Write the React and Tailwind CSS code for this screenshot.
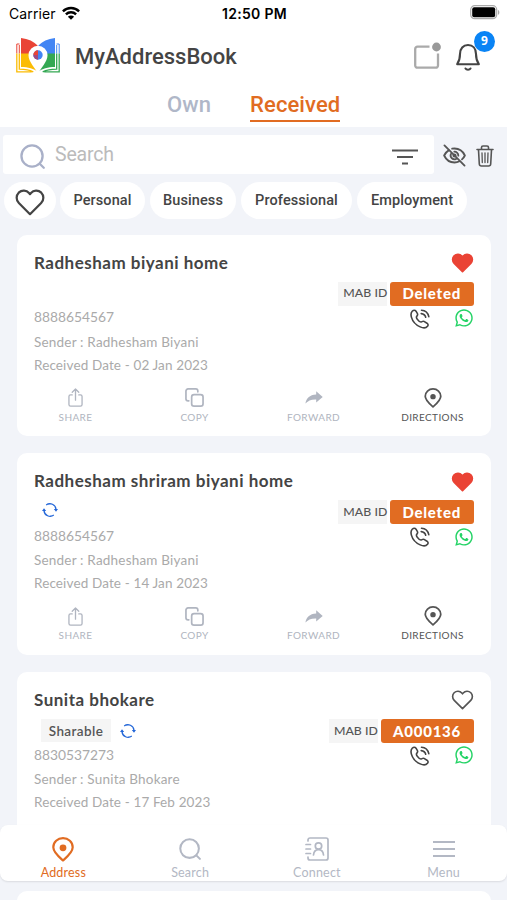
import React, { useState } from 'react';
import { FaWhatsapp } from 'react-icons/fa';
import { IoShareOutline } from 'react-icons/io5';

const tabs = ['Own', 'Received'];

const categories = [
  { name: 'Personal', width: 'w-[85px]' },
  { name: 'Business', width: 'w-[86px]' },
  { name: 'Professional', width: 'w-[111px]' },
  { name: 'Employment', width: 'w-[110px]' },
];

const addresses = [
  {
    id: 1,
    title: 'Radhesham biyani home',
    mabId: 'Deleted',
    phone: '8888654567',
    sender: 'Radhesham Biyani',
    date: '02 Jan 2023',
    favourite: true,
  },
  {
    id: 2,
    title: 'Radhesham shriram biyani home',
    mabId: 'Deleted',
    phone: '8888654567',
    sender: 'Radhesham Biyani',
    date: '14 Jan 2023',
    favourite: true,
    synced: true,
  },
  {
    id: 3,
    title: 'Sunita bhokare',
    mabId: 'A000136',
    phone: '8830537273',
    sender: 'Sunita Bhokare',
    date: '17 Feb 2023',
    favourite: false,
    synced: true,
    sharable: true,
  },
];

const HeartIcon = ({ className, filled }) => (
  <svg viewBox="0 0 24 22" className={className} fill={filled ? 'currentColor' : 'none'} stroke="currentColor" strokeWidth="1.8" strokeLinejoin="round">
    <path d="M12 20.5 2.9 11.4C.5 8.9.6 5.2 2.8 3 5.3.7 9.1.9 11.2 3.3L12 4.2l.8-.9C14.9.9 18.7.7 21.2 3c2.2 2.2 2.3 5.9-.1 8.4Z" />
  </svg>
);

const SearchIcon = ({ className }) => (
  <svg viewBox="0 0 26 26" className={className} fill="none" stroke="currentColor" strokeWidth="2.4" strokeLinecap="round">
    <circle cx="12.5" cy="12.5" r="11" />
    <path d="m20.5 20.500 4.200 4.200" />
  </svg>
);

const PinIcon = ({ className }) => (
  <svg viewBox="0 0 22 25" className={className} fill="none" stroke="currentColor" strokeWidth="2.2" strokeLinejoin="round">
    <path d="M11 23.500C8 20.800 1.300 15.500 1.300 10.300a9.700 9.200 0 0 1 19.400 0C20.700 15.500 14 20.800 11 23.500Z" />
    <circle cx="11" cy="10.800" r="3.4" fill="currentColor" stroke="none" />
  </svg>
);

const CopyIcon = ({ className }) => (
  <svg viewBox="0 0 20 20" className={className} fill="none" stroke="currentColor" strokeWidth="1.8" strokeLinecap="round">
    <rect x="7" y="7" width="12" height="12" rx="2.5" />
    <path d="M4 13.500H3.200A2.200 2.200 0 0 1 1 11.300V3.200A2.200 2.200 0 0 1 3.200 1h8.100a2.200 2.200 0 0 1 2.200 2.200V4" />
  </svg>
);

const ForwardIcon = ({ className }) => (
  <svg viewBox="0 0 18 13" className={className} fill="currentColor">
    <path d="M11.200.3 17.700 6 11.200 11.600V8.400C6 8.200 3 9.700.4 12.600 1.200 7.500 4.500 3.900 11.200 3.500Z" />
  </svg>
);

const PhoneIcon = ({ className }) => (
  <svg viewBox="0 0 20 20" className={className} fill="none" stroke="currentColor" strokeWidth="1.6" strokeLinecap="round" strokeLinejoin="round">
    <path d="M2.200 2.300C3.600.9 5.100.9 6 2.200l1.300 2.100c.6 1 .4 1.900-.4 2.800-.9 1-.7 1.700.4 3.100 1.300 1.700 2.900 3.100 3.900 2.800.9-.3 1.700-1.200 2.800-.6l3 1.800c1.200.8 1.400 2 .5 3.100-1.600 2-4.300 2-7.300.6C5.700 15.900 2.500 12 1.400 8.100.7 5.600.9 3.700 2.200 2.300Z" />
    <path d="M11.500 1.200c3.800.2 6.600 3.100 7.300 6.500M11.200 4.600c2.300.2 4 1.700 4.500 3.700" />
  </svg>
);

const SyncIcon = ({ className }) => (
  <svg viewBox="0 0 16 14" className={className} fill="none" stroke="currentColor" strokeWidth="1.300">
    <path d="M2 7.600A6.100 6.100 0 0 0 11.800 12M14 6.400A6.100 6.100 0 0 0 4.200 2M6 1.200A6.100 6.100 0 0 1 8 .9M10 12.800A6.100 6.100 0 0 1 8 13.100" />
    <path d="M0 8 2 5.200l2.200 2.700ZM16 6l-2 2.800L11.800 6Z" fill="currentColor" stroke="none" />
  </svg>
);

const EyeOffIcon = ({ className }) => (
  <svg viewBox="0 0 24 24" className={className} fill="none" stroke="currentColor" strokeWidth="1.9" strokeLinecap="round">
    <path d="M6.200 6.400C4 7.800 2.200 9.800 1.200 12c2 4.300 6.100 7.300 10.800 7.300 1.900 0 3.700-.5 5.300-1.300M9.500 4.900c.8-.2 1.600-.2 2.500-.2 4.700 0 8.800 3 10.800 7.300-.7 1.500-1.700 2.900-3 4" />
    <path d="M8.200 10.500a4 4 0 0 0 5.500 5M11.800 8a4.100 4.100 0 0 1 4.200 4.200M1.500 1.500l21 21" />
    <circle cx="12" cy="12" r="1.2" fill="currentColor" />
  </svg>
);

const TrashIcon = ({ className }) => (
  <svg viewBox="0 0 18 22" className={className} fill="none" stroke="currentColor" strokeWidth="1.6" strokeLinecap="round" strokeLinejoin="round">
    <path d="M1 4.500h16M5.500 4.300V2.500C5.500 1.500 6 1 7 1h4c1 0 1.500.5 1.500 1.500v1.800M2.500 4.700 3.300 19c.1 1.300.9 2 2.100 2h7.200c1.200 0 2-.7 2.100-2l.8-14.300" />
    <path d="M6 7.800 6.300 17.500M9 7.800v9.700M12 7.800l-.3 9.700" strokeWidth="1.3" />
  </svg>
);

const ContactsIcon = ({ className }) => (
  <svg viewBox="0 0 24 24" className={className} fill="none" stroke="currentColor" strokeWidth="1.7" strokeLinecap="round">
    <path d="M3 4V3a2 2 0 0 1 2-2h16a2 2 0 0 1 2 2v18a2 2 0 0 1-2 2H5a2 2 0 0 1-2-2v-1M1 7.500h4.500M1 12h4.500M1 16.500h4.500" />
    <circle cx="13.500" cy="9" r="3.200" />
    <path d="M8.500 18c.3-3.300 2.200-5.300 5-5.300s4.700 2 5 5.300" />
  </svg>
);

const MenuIcon = ({ className }) => (
  <svg viewBox="0 0 22 16" className={className} fill="none" stroke="currentColor" strokeWidth="2">
    <path d="M0 1h22M0 8h22M0 15h22" />
  </svg>
);

// open book with a map pin cut out of the middle
const Logo = () => (
  <svg viewBox="0 0 44 36" className="-mt-[5px] ml-px h-9 w-11">
    <path d="M5 0c7 .8 13 3.500 17 8v8H5Z" fill="#e94436" />
    <path d="M39 0c-7 .8-13 3.500-17 8v8h17Z" fill="#4285f4" />
    <path d="M5 15.500h17V34c-4-3.500-10-5-17-5Z" fill="#fbbc05" />
    <path d="M39 15.500H22V34c4-3.500 10-5 17-5Z" fill="#34a853" />
    <path d="M3.500 6H.8v9.500M3.300 7v8.500" stroke="#e94436" strokeWidth="1" fill="none" />
    <path d="M40.500 6h2.700v9.500M40.700 7v8.500" stroke="#4285f4" strokeWidth="1" fill="none" />
    <path d="M.8 15.500v18.300h15M3.300 15.500v15.700c5.700 0 10 .6 14 2.600" fill="none" stroke="#fbbc05" strokeWidth="1.3" />
    <path d="M43.200 15.500v18.300h-15M40.700 15.500v15.700c-5.700 0-10 .6-14 2.600" fill="none" stroke="#34a853" strokeWidth="1.3" />
    <path d="M22 36C19.500 30 12.500 24 12.500 17.200a9.500 9.500 0 0 1 19 0C31.500 24 24.500 30 22 36Z" fill="#fff" />
    <circle cx="22" cy="17" r="4.700" fill="#4285f4" />
    <path d="M22 12.300V17h-4.700a4.700 4.700 0 0 1 4.700-4.700Z" fill="#e94436" />
    <path d="M22 21.700a4.700 4.700 0 0 1-4.700-4.700H22Z" fill="#a04a80" />
  </svg>
);

const StatusBar = () => (
  <div className="flex h-7 items-center justify-between pl-[9px] pr-[7px] text-black">
    <div className="-mt-px flex w-40 items-center gap-[6px]">
      <span className="font-[Inter] text-[14px] tracking-[0.1px]">Carrier</span>
      <svg viewBox="0 0 18 14" className="-mt-px h-[14px] w-[18px]" fill="none" stroke="currentColor" strokeWidth="2.4">
        <path d="M.9 5.300a11.500 11.500 0 0 1 16.200 0M3.900 8.300a7.200 7.200 0 0 1 10.200 0" />
        <path d="M9 13.800 5.900 10.700a4.400 4.400 0 0 1 6.200 0Z" fill="currentColor" stroke="none" />
      </svg>
    </div>
    <span className="-mt-px font-[Inter] text-[14px] font-semibold tracking-[0.3px]">12:50 PM</span>
    <div className="-mt-[3px] flex w-40 justify-end">
      <svg viewBox="0 0 30 15" className="h-[15px] w-[30px]">
        <rect x=".7" y=".7" width="26" height="13" rx="4" fill="#fff" stroke="#aaa" strokeWidth="1.200" />
        <rect x="2.200" y="2.200" width="23" height="10" rx="2" fill="#000" />
        <path d="M28 5c1.800.6 1.800 4.200 0 4.800Z" fill="#aaa" />
      </svg>
    </div>
  </div>
);

const Header = () => (
  <div className="flex h-[60px] items-center pl-[15px] pr-[27px]">
    <Logo />
    <h1 className="-mt-[3px] ml-[15px] flex-1 text-[22px] font-medium tracking-[0px] text-[#444]">MyAddressBook</h1>
    <svg viewBox="0 0 28 28" className="-mt-[5px] mr-[15px] h-7 w-7" fill="none" stroke="#aaa" strokeWidth="2.3">
      <path d="M16.500 4.700H4.500A2.200 2.200 0 0 0 2.200 6.900v16.600a2.200 2.200 0 0 0 2.300 2.200h18.200a2.200 2.200 0 0 0 2.300-2.200V11.500" />
      <circle cx="23.500" cy="5" r="4.400" fill="#999" stroke="none" />
    </svg>
    <div className="relative -mt-[3px]">
      <svg viewBox="0 0 24 28" className="h-7 w-6" fill="none" stroke="#444" strokeWidth="2.1" strokeLinecap="round" strokeLinejoin="round">
        <path d="M1.200 21.200C3 18.500 4 16 4 11 4 5.500 7.200 2 12 2s8 3.500 8 9c0 5 1 7.500 2.800 10.200Z" />
        <path d="M9.500 25.500c1 1.700 4 1.700 5 0" />
      </svg>
      <span className="absolute -top-[12px] left-[18px] flex h-[21px] w-[21px] items-center justify-center rounded-full bg-[#0a84f5] font-['Open_Sans'] text-[12px] font-bold text-white">
        9
      </span>
    </div>
  </div>
);

const MabId = ({ value }) => (
  <div className="flex h-6 gap-[3px]">
    <span className="flex items-center bg-[#f5f5f5] pl-[5px] text-[12.300px] font-medium tracking-[0.050px] text-[#555]">MAB ID</span>
    <span className="flex items-center rounded-[3px] bg-[#e16c22] pl-3 pr-[13px] text-[15px] font-black tracking-[0.75px] text-white">
      {value}
    </span>
  </div>
);

const Action = ({ label, active, children }) => (
  <button type="button" className={`flex flex-col items-center ${active ? 'text-[#555]' : 'text-[#b0b5c0]'}`}>
    <span className="flex h-5 items-center">{children}</span>
    <span className="mt-[3px] text-[10px] leading-[13px] tracking-[0.4px]">{label}</span>
  </button>
);

const AddressCard = ({ address }) => (
  <div className="mx-4 ml-[17px] h-[201.500px] shrink-0 overflow-hidden rounded-[10px] bg-white px-[17px] pt-[14px]">
    <div className="flex h-7 items-center justify-between">
      <h2 className="text-[17px] font-bold tracking-[0.5px] text-[#444]">{address.title}</h2>
      <HeartIcon filled={address.favourite} className={`mt-px h-5 w-[23px] ${address.favourite ? 'text-[#ea4335]' : 'text-[#555]'}`} />
    </div>
    <div className="mt-[5px] flex h-6 items-center">
      <div className="flex flex-1 items-center gap-[9px] pl-2">
        {address.sharable && (
          <span className="-ml-px flex h-[23px] w-[70px] items-center justify-center bg-[#f5f5f5] text-[13.500px] font-semibold tracking-[0.4px] text-[#555]">Sharable</span>
        )}
        {address.synced && <SyncIcon className={`h-[14px] w-4 text-[#2467d8] ${address.sharable ? '' : '-mt-[5px]'}`} />}
      </div>
      <MabId value={address.mabId} />
    </div>
    <div className="flex h-6 items-center text-[#aaa]">
      <span className="flex-1 text-[13.800px]">{address.phone}</span>
      <PhoneIcon className="mr-6 mt-[2px] h-5 w-5 text-[#444]" />
      <FaWhatsapp className="mt-px h-5 w-5 text-[#25d366]" />
    </div>
    <p className="h-6 text-[13.500px] leading-6 tracking-[0.2px] text-[#aaa]">Sender : {address.sender}</p>
    <p className="h-[23px] text-[13.500px] leading-[23px] tracking-[0.13px] text-[#aaa]">Received Date - {address.date}</p>
    <div className="-ml-[18px] -mr-[18px] mt-[11px] grid grid-cols-4">
      <Action label="SHARE">
        <IoShareOutline className="h-[21px] w-[21px]" />
      </Action>
      <Action label="COPY">
        <CopyIcon className="h-[19px] w-[19px]" />
      </Action>
      <Action label="FORWARD">
        <ForwardIcon className="h-[13px] w-[18px]" />
      </Action>
      <Action label="DIRECTIONS" active>
        <PinIcon className="h-5 w-[18px]" />
      </Action>
    </div>
  </div>
);

const NavItem = ({ label, active, children }) => (
  <button type="button" className={`flex flex-col items-center ${active ? 'text-[#e16c22]' : 'text-[#b3b8c4]'}`}>
    <span className="flex h-7 items-center">{children}</span>
    <span className="mt-[2px] text-[12.500px] leading-4 tracking-[0.2px]">{label}</span>
  </button>
);

const App = () => {
  const [activeTab, setActiveTab] = useState('Received');

  return (
    <div className="relative flex h-[900px] w-[507px] flex-col overflow-hidden bg-[#f2f4f9] font-[Roboto,sans-serif]">
      <div className="h-[127px] shrink-0 bg-white">
        <StatusBar />
        <Header />
        <div className="flex gap-[39px] pl-[167px]">
          {tabs.map((tab) => (
            <button
              key={tab}
              type="button"
              onClick={() => setActiveTab(tab)}
              className={`h-[34px] border-b-2 text-[22px] font-medium leading-[33px] tracking-[0.1px] ${
                activeTab === tab ? 'border-[#e16c22] text-[#e16c22]' : 'border-transparent text-[#b0b7c8]'
              }`}
            >
              {tab}
            </button>
          ))}
        </div>
      </div>

      <div className="mt-2 flex h-[39px] shrink-0 items-center pl-[3px] text-[#555]">
        <div className="flex h-full w-[431px] items-center rounded-[3px] bg-white pl-[17px] pr-4">
          <SearchIcon className="mt-[3px] h-[25px] w-[25px] text-[#a9b0c8]" />
          <span className="ml-[10px] flex-1 text-[19.500px] tracking-[-0.2px] text-[#bbb]">Search</span>
          <svg viewBox="0 0 26 16" className="mt-1 h-4 w-[26px]" fill="none" stroke="currentColor" strokeWidth="2">
            <path d="M0 1.500h26M5 8h16M10 14.500h6" />
          </svg>
        </div>
        <EyeOffIcon className="ml-[9px] mt-[2px] h-[23px] w-[23px]" />
        <TrashIcon className="ml-[10px] mt-[2px] h-[22px] w-[18px]" />
      </div>

      <div className="mt-2 flex h-[37px] shrink-0 gap-[5px] pl-1">
        <button type="button" className="mr-[-1px] flex w-[52px] items-center justify-center rounded-full bg-white pt-1">
          <HeartIcon className="h-[27px] w-[30px] text-[#444]" />
        </button>
        {categories.map((category) => (
          <button
            key={category.name}
            type="button"
            className={`flex items-center justify-center rounded-full bg-white text-[14.500px] font-medium tracking-[0.1px] text-[#444] ${category.width}`}
          >
            {category.name}
          </button>
        ))}
      </div>

      <div className="mt-[15.500px] flex flex-col gap-[17.200px] font-[Lato,sans-serif]">
        {addresses.map((address) => (
          <AddressCard key={address.id} address={address} />
        ))}
        <div className="ml-[17px] mr-4 h-[202px] shrink-0 rounded-[10px] bg-white" />
      </div>

      <nav className="absolute inset-x-0 top-[825px] grid h-14 grid-cols-4 rounded-lg bg-white pt-[10px] font-[Lato,sans-serif] shadow-[0_1px_2px_rgba(0,0,0,0.1)]">
        <NavItem label="Address" active>
          <PinIcon className="h-[25px] w-[22px]" />
        </NavItem>
        <NavItem label="Search">
          <SearchIcon className="h-[22px] w-[22px]" />
        </NavItem>
        <NavItem label="Connect">
          <ContactsIcon className="h-6 w-6" />
        </NavItem>
        <NavItem label="Menu">
          <MenuIcon className="h-4 w-[22px]" />
        </NavItem>
      </nav>
    </div>
  );
};

export default App;
